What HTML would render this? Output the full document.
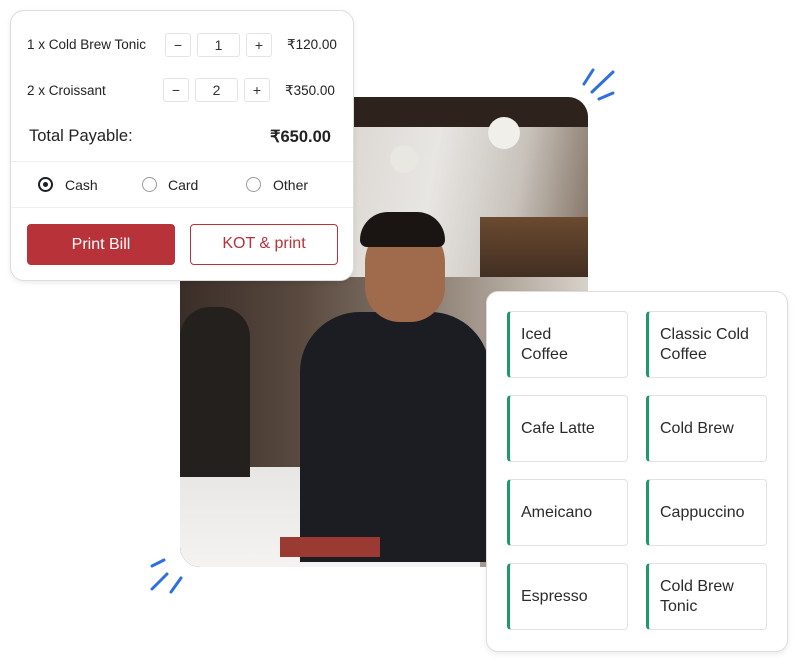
<!DOCTYPE html>
<html><head><meta charset="utf-8"><style>
*{box-sizing:border-box;margin:0;padding:0}
body{width:800px;height:664px;background:#fff;font-family:"Liberation Sans",sans-serif;position:relative;overflow:hidden;color:#222}
.abs{position:absolute}
.photo{left:180px;top:97px;width:408px;height:470px;border-radius:20px;overflow:hidden;background:#cfc9c2}
.card{background:#fff;border:1px solid #ddd;border-radius:12px;box-shadow:0 2px 6px rgba(0,0,0,.08)}
.qb{position:absolute;border:1px solid #e4e4e4;border-radius:3px;height:24px;text-align:center;line-height:22px;font-size:14px;color:#333}
.item{position:absolute;width:121px;height:67px;border:1px solid #e2e2e2;border-left:3px solid #1e9a6a;border-radius:4px;font-size:16px;color:#2a2a2a;padding-left:11px;display:flex;align-items:center;line-height:20px}
.rad{position:absolute;width:15px;height:15px;border:1.5px solid #999;border-radius:50%}
</style></head><body>
<div class="abs photo">
 <div class="abs" style="left:0;top:0;width:408px;height:200px;background:linear-gradient(100deg,#3a2b22 0,#6a5a50 20%,#d9d5d0 35%,#e8e6e3 60%,#c8c2bb 80%,#7c6b5c 100%)"></div>
 <div class="abs" style="left:0;top:0;width:408px;height:30px;background:#2d221c"></div>
 <div class="abs" style="left:300px;top:120px;width:108px;height:70px;background:linear-gradient(#6b4a30,#3b2a20)"></div>
 <div class="abs" style="left:0;top:180px;width:408px;height:290px;background:linear-gradient(90deg,#3a2e28 0,#5a4a40 30%,#8a7c70 60%,#d9d2ca 100%)"></div>
 <div class="abs" style="left:0;top:370px;width:300px;height:100px;background:linear-gradient(#e8e6e4,#f4f3f2)"></div>
 <div class="abs" style="left:120px;top:215px;width:190px;height:250px;background:#1c1d22;border-radius:60px 60px 0 0"></div>
 <div class="abs" style="left:185px;top:125px;width:80px;height:100px;background:#a06a4c;border-radius:40px 40px 35px 35px"></div>
 <div class="abs" style="left:180px;top:115px;width:85px;height:35px;background:#1a1512;border-radius:40px 40px 10px 10px"></div>
 <div class="abs" style="left:210px;top:48px;width:28px;height:28px;background:#e9e7e2;border-radius:50%"></div>
 <div class="abs" style="left:308px;top:20px;width:32px;height:32px;background:#f1efea;border-radius:50%"></div>
 <div class="abs" style="left:0;top:210px;width:70px;height:170px;background:#24201e;border-radius:30px 30px 0 0"></div>
 <div class="abs" style="left:100px;top:440px;width:100px;height:20px;background:#9b3a32"></div>
</div>
<div class="abs card" style="left:10px;top:10px;width:344px;height:271px;border-radius:14px">
 <div class="abs" style="left:16px;top:26px;font-size:13.5px">1 x Cold Brew Tonic</div>
 <div class="qb" style="left:154px;top:22px;width:26px">−</div>
 <div class="qb" style="left:186px;top:22px;width:43px">1</div>
 <div class="qb" style="left:235px;top:22px;width:26px">+</div>
 <div class="abs" style="left:276px;top:26px;font-size:13.5px">₹120.00</div>
 <div class="abs" style="left:16px;top:72px;font-size:13.5px">2 x Croissant</div>
 <div class="qb" style="left:152px;top:67px;width:26px">−</div>
 <div class="qb" style="left:184px;top:67px;width:43px">2</div>
 <div class="qb" style="left:233px;top:67px;width:26px">+</div>
 <div class="abs" style="left:274px;top:72px;font-size:13.5px">₹350.00</div>
 <div class="abs" style="left:18px;top:116px;font-size:16.5px">Total Payable:</div>
 <div class="abs" style="left:259px;top:116px;font-size:16.5px;font-weight:bold">₹650.00</div>
 <div class="abs" style="left:0;top:150px;width:342px;height:1px;background:#f0f0f0"></div>
 <div class="rad" style="left:27px;top:166px;border:2px solid #1d1f26"><div style="position:absolute;left:3px;top:3px;width:5px;height:5px;border-radius:50%;background:#1d1f26"></div></div>
 <div class="abs" style="left:54px;top:166px;font-size:14px">Cash</div>
 <div class="rad" style="left:131px;top:166px"></div>
 <div class="abs" style="left:157px;top:166px;font-size:14px">Card</div>
 <div class="rad" style="left:235px;top:166px"></div>
 <div class="abs" style="left:262px;top:166px;font-size:14px">Other</div>
 <div class="abs" style="left:0;top:196px;width:342px;height:1px;background:#f0f0f0"></div>
 <div class="abs" style="left:16px;top:213px;width:148px;height:41px;background:#b8323a;border-radius:4px;color:#fff;font-size:16px;text-align:center;line-height:41px">Print Bill</div>
 <div class="abs" style="left:179px;top:213px;width:148px;height:41px;border:1.5px solid #b8323a;border-radius:4px;color:#b8323a;font-size:16px;text-align:center;line-height:38px">KOT &amp; print</div>
</div>
<div class="abs card" style="left:486px;top:291px;width:302px;height:361px">
 <div class="item" style="left:20px;top:19px">Iced<br>Coffee</div>
 <div class="item" style="left:159px;top:19px">Classic Cold<br>Coffee</div>
 <div class="item" style="left:20px;top:103px">Cafe Latte</div>
 <div class="item" style="left:159px;top:103px">Cold Brew</div>
 <div class="item" style="left:20px;top:187px">Ameicano</div>
 <div class="item" style="left:159px;top:187px">Cappuccino</div>
 <div class="item" style="left:20px;top:271px">Espresso</div>
 <div class="item" style="left:159px;top:271px">Cold Brew<br>Tonic</div>
</div>
<svg class="abs" style="left:0;top:0" width="800" height="664" fill="none" stroke="#2f6fe0" stroke-width="3" stroke-linecap="round">
 <path d="M584 84L593 70M592 92L613 72M599 99L613 93"/>
 <path d="M152 566L164 560M152 589L167 574M171 592L181 578"/>
</svg>
</body></html>
